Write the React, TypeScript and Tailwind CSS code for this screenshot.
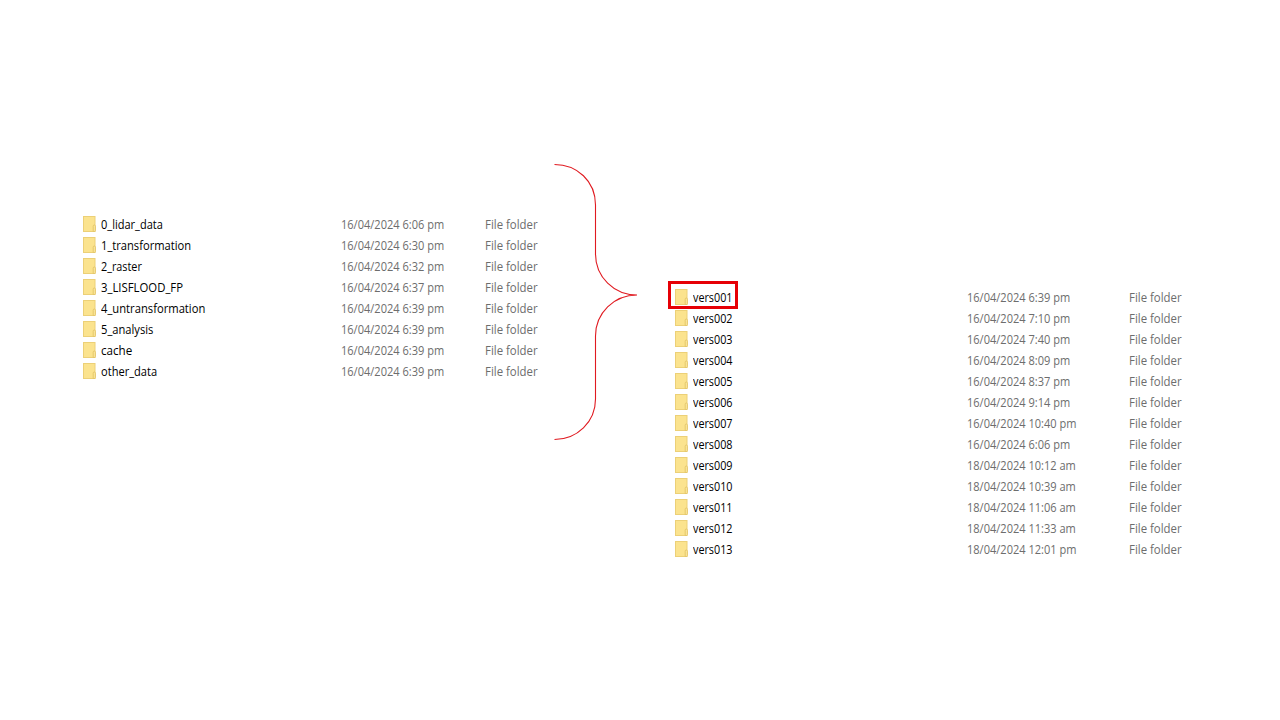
type Entry = { name: string; modified: string; fit?: string };

const stages: Entry[] = [
  { name: '0_lidar_data', modified: '16/04/2024 6:06 pm', fit: 'scale-x-[0.92]' },
  { name: '1_transformation', modified: '16/04/2024 6:30 pm', fit: 'scale-x-[0.93]' },
  { name: '2_raster', modified: '16/04/2024 6:32 pm', fit: 'scale-x-[0.9]' },
  { name: '3_LISFLOOD_FP', modified: '16/04/2024 6:37 pm', fit: 'scale-x-[0.945]' },
  { name: '4_untransformation', modified: '16/04/2024 6:39 pm', fit: 'scale-x-[0.935]' },
  { name: '5_analysis', modified: '16/04/2024 6:39 pm', fit: 'scale-x-[0.93]' },
  { name: 'cache', modified: '16/04/2024 6:39 pm', fit: 'scale-x-[0.97]' },
  { name: 'other_data', modified: '16/04/2024 6:39 pm', fit: 'scale-x-[0.925]' },
];

const versions: Entry[] = [
  { name: 'vers001', modified: '16/04/2024 6:39 pm' },
  { name: 'vers002', modified: '16/04/2024 7:10 pm' },
  { name: 'vers003', modified: '16/04/2024 7:40 pm' },
  { name: 'vers004', modified: '16/04/2024 8:09 pm' },
  { name: 'vers005', modified: '16/04/2024 8:37 pm' },
  { name: 'vers006', modified: '16/04/2024 9:14 pm' },
  { name: 'vers007', modified: '16/04/2024 10:40 pm' },
  { name: 'vers008', modified: '16/04/2024 6:06 pm' },
  { name: 'vers009', modified: '18/04/2024 10:12 am' },
  { name: 'vers010', modified: '18/04/2024 10:39 am' },
  { name: 'vers011', modified: '18/04/2024 11:06 am' },
  { name: 'vers012', modified: '18/04/2024 11:33 am' },
  { name: 'vers013', modified: '18/04/2024 12:01 pm' },
];

function FolderIcon() {
  return (
    <svg className="-mt-px mr-[5px] shrink-0" width="13" height="16" viewBox="0 0 13 16">
      <rect x="0.5" y="0.5" width="11.5" height="15" fill="#fbe38e" stroke="#ecd077" />
      <path d="M10.2 15.5V10.2q0-1.2 1.1-1.2t1.1 1.2v4.3q0 1-1 1z" fill="#fbe79c" stroke="#e3c467" strokeWidth="0.9" />
    </svg>
  );
}

type FileListProps = { entries: Entry[]; nameColumn: string; dateColumn: string; highlightFirst?: boolean };

function FileList({ entries, nameColumn, dateColumn, highlightFirst }: FileListProps) {
  return (
    <ul className="flex flex-col">
      {entries.map((entry, i) => (
        <li key={entry.name} className="relative flex h-[21px] items-center whitespace-nowrap">
          <div className={`${nameColumn} flex shrink-0 items-center text-black`}>
            <FolderIcon />
            <span className={`inline-block origin-left ${entry.fit ?? 'scale-x-[0.9]'}`}>{entry.name}</span>
          </div>
          <div className={`${dateColumn} shrink-0 text-[#6d6d6d]`}>
            <span className="inline-block origin-left scale-x-[0.92]">{entry.modified}</span>
          </div>
          <span className="inline-block shrink-0 origin-left scale-x-[0.95] text-[#6d6d6d]">File folder</span>
          {highlightFirst && i === 0 && (
            <div className="absolute -top-[6px] -left-[7px] h-[28px] w-[70px] border-3 border-[#e60006]" />
          )}
        </li>
      ))}
    </ul>
  );
}

function Brace() {
  return (
    <svg className="mt-[163px] w-[84px] shrink-0" width="84" height="278" viewBox="0 0 84 278" fill="none" stroke="#e01a20" strokeWidth="1.1">
      <path d="M0.5 1.5C23 1.5 41.5 18 41.5 42V91C41.5 114 60 132 83 132C60 132 41.5 150 41.5 173V236C41.5 259 23 276.5 0.5 276.5" />
    </svg>
  );
}

export default function App() {
  return (
    <main className="flex h-[720px] w-[1280px] items-start overflow-hidden bg-white font-['Open_Sans','Noto_Sans',sans-serif] text-[12px] leading-[21px]">
      <section className="mt-[214px] ml-[83px] w-[471px] shrink-0">
        <FileList entries={stages} nameColumn="w-[258px]" dateColumn="w-[144px]" />
      </section>
      <Brace />
      <section className="mt-[287px] ml-[37px] shrink-0">
        <FileList entries={versions} nameColumn="w-[292px]" dateColumn="w-[162px]" highlightFirst />
      </section>
    </main>
  );
}
